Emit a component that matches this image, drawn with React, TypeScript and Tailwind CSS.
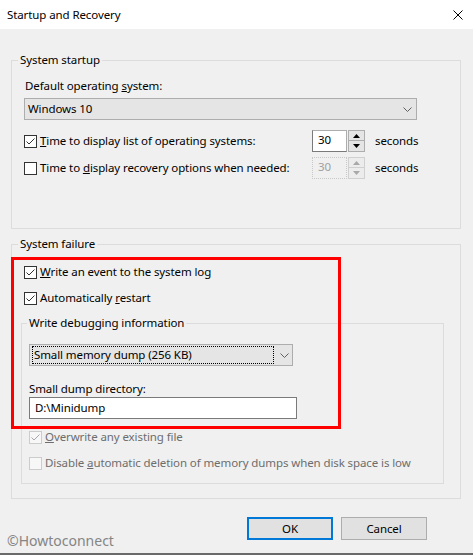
import React from "react";

function Check({ checked, disabled }: { checked: boolean; disabled?: boolean }) {
  return (
    <span
      className={
        disabled
          ? "w-[13px] h-[13px] border border-[#cccccc] bg-[#f7f7f7] flex items-center justify-center shrink-0"
          : "w-[13px] h-[13px] border border-[#333333] bg-white flex items-center justify-center shrink-0"
      }
    >
      {checked && (
        <svg width="11" height="11" viewBox="0 0 11 11">
          <path d="M1.5 5.5 L4 8 L9.5 2.5" fill="none" stroke={disabled ? "#a8a8a8" : "#333333"} strokeWidth="1" />
        </svg>
      )}
    </span>
  );
}

function Chevron() {
  return (
    <svg width="9" height="5" viewBox="0 0 9 5" className="shrink-0">
      <path d="M0.5 0.5 L4.5 4.5 L8.5 0.5" fill="none" stroke="#606060" strokeWidth="1" />
    </svg>
  );
}

function Spin({ disabled }: { disabled?: boolean }) {
  const tri = disabled ? "#a8a8a8" : "#000000";
  return (
    <div className="flex h-[22px]">
      <div
        className={
          disabled
            ? "w-[35px] h-[22px] border border-dotted border-[#c8c8c8] bg-[#f0f0f0] text-[#a0a0a0] pl-[5px] leading-[18px]"
            : "w-[35px] h-[22px] border border-[#7a7a7a] border-t-[#adadad] border-r-[#adadad] bg-white pl-[5px] leading-[18px]"
        }
      >
        30
      </div>
      <div className="ml-[1px] w-[17px] flex flex-col">
        <div className={disabled ? "h-[11px] border border-[#d0d0d0] bg-[#ececec] flex items-center justify-center" : "h-[11px] border border-[#adadad] bg-[#e5e5e5] flex items-center justify-center"}>
          <svg width="7" height="4" viewBox="0 0 7 4">
            <path d="M0 4 L3.5 0 L7 4 Z" fill={tri} />
          </svg>
        </div>
        <div className={disabled ? "h-[11px] border border-t-0 border-[#d0d0d0] bg-[#ececec] flex items-center justify-center" : "h-[11px] border border-t-0 border-[#adadad] bg-[#e5e5e5] flex items-center justify-center"}>
          <svg width="7" height="4" viewBox="0 0 7 4">
            <path d="M0 0 L3.5 4 L7 0 Z" fill={tri} />
          </svg>
        </div>
      </div>
    </div>
  );
}

export default function App() {
  return (
    <div className="w-[473px] h-[555px] flex flex-col bg-[#f0f0f0] border-b-2 border-[#6a6a6a] text-[11.5px] tracking-[-0.1px] leading-[16px] text-black font-['Segoe_UI','Noto_Sans',sans-serif]">
      <div className="h-[29px] shrink-0 bg-white flex items-center justify-between pl-[7px] pr-[10px]">
        <span>Startup and Recovery</span>
        <svg width="10" height="10" viewBox="0 0 10 10">
          <path d="M0.5 0.5 L9.5 9.5 M9.5 0.5 L0.5 9.5" stroke="#000000" strokeWidth="1" />
        </svg>
      </div>

      <div className="relative flex-1 flex flex-col pl-[11px]">
        <fieldset className="mt-[23px] w-[450px] border border-[#dcdcdc] p-0 m-0">
          <legend className="ml-[6px] px-[2px] leading-[16px]">System startup</legend>
          <div className="pl-[12px] pb-[49px] flex flex-col">
            <div className="mt-[10px] pl-[1px]">
              Default operating <u>s</u>ystem:
            </div>
            <div className="mt-[4px] w-[393px] h-[22px] border border-[#adadad] bg-[#e5e5e5] flex items-center justify-between pl-[3px] pr-[4px]">
              <span>Windows 10</span>
              <Chevron />
            </div>
            <div className="mt-[10px] flex items-center h-[22px]">
              <div className="w-[288px] flex items-center gap-[3px]">
                <Check checked />
                <span>
                  <u>T</u>ime to display list of operating systems:
                </span>
              </div>
              <Spin />
              <span className="ml-[10px]">seconds</span>
            </div>
            <div className="mt-[5px] flex items-center h-[22px]">
              <div className="w-[288px] flex items-center gap-[3px]">
                <Check checked={false} />
                <span>
                  Time to <u>d</u>isplay recovery options when needed:
                </span>
              </div>
              <Spin disabled />
              <span className="ml-[10px]">seconds</span>
            </div>
          </div>
        </fieldset>

        <fieldset className="mt-[7px] w-[450px] border border-[#dcdcdc] p-0 m-0">
          <legend className="ml-[6px] px-[2px] leading-[16px]">System failure</legend>
          <div className="pb-[14px] flex flex-col">
            <div className="mt-[12px] pl-[12px] flex items-center gap-[3px] h-[16px]">
              <Check checked />
              <span>
                <u>W</u>rite an event to the system log
              </span>
            </div>
            <div className="mt-[10px] pl-[12px] flex items-center gap-[3px] h-[16px]">
              <Check checked />
              <span>
                Automatically <u>r</u>estart
              </span>
            </div>

            <fieldset className="mt-[9px] ml-[9px] w-[423px] border border-[#dcdcdc] p-0">
              <legend className="ml-[5px] px-[2px] leading-[16px]">Write debugging information</legend>
              <div className="pl-[7px] pb-[12px] flex flex-col">
                <div className="mt-[13px] w-[264px] h-[22px] border border-[#adadad] bg-[#e5e5e5] flex items-center justify-between pl-[2px] pr-[3px]">
                  <div className="w-[242px] h-[18px] border border-dotted border-black flex items-center pl-[1px]">
                    Small memory dump (256 KB)
                  </div>
                  <Chevron />
                </div>
                <div className="mt-[15px]">Small dump directory:</div>
                <div className="w-[268px] h-[22px] border border-[#7a7a7a] bg-white flex items-center pl-[5px]">
                  D:\Minidump
                </div>
                <div className="mt-[10px] flex items-center gap-[3px] h-[16px] text-[#6d6d6d]">
                  <Check checked disabled />
                  <span>
                    <u>O</u>verwrite any existing file
                  </span>
                </div>
                <div className="mt-[10px] flex items-center gap-[3px] h-[16px] text-[#6d6d6d]">
                  <Check checked={false} disabled />
                  <span>
                    Disable <u>a</u>utomatic deletion of memory dumps when disk space is low
                  </span>
                </div>
              </div>
            </fieldset>
          </div>
        </fieldset>

        <div className="mt-[18px] pl-[236px] flex gap-[8px]">
          <div className="w-[86px] h-[23px] border-2 border-[#0078d7] bg-[#e1e1e1] flex items-center justify-center">
            OK
          </div>
          <div className="w-[86px] h-[23px] border border-[#adadad] bg-[#e1e1e1] flex items-center justify-center">
            Cancel
          </div>
        </div>

        <div className="absolute left-[7px] top-[504px] text-[14px] tracking-normal leading-[16px] text-[#858585]">©Howtoconnect</div>
        <div className="absolute left-[11px] top-[228px] w-[330px] h-[172px] border-[3px] border-[#ff0000]" />
      </div>
    </div>
  );
}
